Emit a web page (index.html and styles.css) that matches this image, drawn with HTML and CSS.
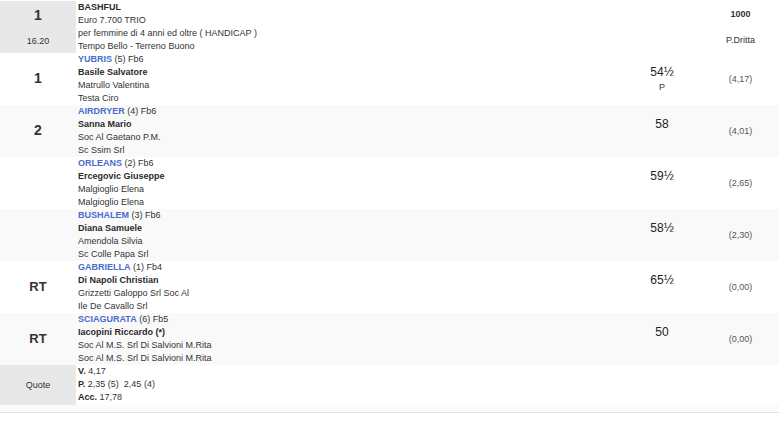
FILE: index.html
```html
<!DOCTYPE html>
<html lang="it">
<head>
<meta charset="utf-8">
<title>Risultati corsa</title>
<link rel="stylesheet" href="styles.css">
</head>
<body>
<div class="race">
<table class="results">
  <colgroup>
    <col class="c-pos">
    <col class="c-info">
    <col class="c-weight">
    <col class="c-odds">
  </colgroup>
  <tr class="head">
    <td class="pos grey top">
      <div class="big">1</div>
      <div class="time">16.20</div>
    </td>
    <td class="info">
      <div><b>BASHFUL</b></div>
      <div>Euro 7.700 TRIO</div>
      <div>per femmine di 4 anni ed oltre ( HANDICAP )</div>
      <div>Tempo Bello - Terreno Buono</div>
    </td>
    <td></td>
    <td class="odds">
      <div><b>1000</b></div>
      <div>&nbsp;</div>
      <div>P.Dritta</div>
    </td>
  </tr>
  <tr>
    <td class="pos"><span class="big">1</span></td>
    <td class="info">
      <div><span class="horse">YUBRIS</span> (5) Fb6</div>
      <div><b>Basile Salvatore</b></div>
      <div>Matrullo Valentina</div>
      <div>Testa Ciro</div>
    </td>
    <td class="weight"><div class="kg">54½</div><div class="sub">P</div></td>
    <td class="odds">(4,17)</td>
  </tr>
  <tr class="alt">
    <td class="pos"><span class="big">2</span></td>
    <td class="info">
      <div><span class="horse">AIRDRYER</span> (4) Fb6</div>
      <div><b>Sanna Mario</b></div>
      <div>Soc Al Gaetano P.M.</div>
      <div>Sc Ssim Srl</div>
    </td>
    <td class="weight"><div class="kg">58</div><div class="sub">&nbsp;</div></td>
    <td class="odds">(4,01)</td>
  </tr>
  <tr>
    <td class="pos"></td>
    <td class="info">
      <div><span class="horse">ORLEANS</span> (2) Fb6</div>
      <div><b>Ercegovic Giuseppe</b></div>
      <div>Malgioglio Elena</div>
      <div>Malgioglio Elena</div>
    </td>
    <td class="weight"><div class="kg">59½</div><div class="sub">&nbsp;</div></td>
    <td class="odds">(2,65)</td>
  </tr>
  <tr class="alt">
    <td class="pos"></td>
    <td class="info">
      <div><span class="horse">BUSHALEM</span> (3) Fb6</div>
      <div><b>Diana Samuele</b></div>
      <div>Amendola Silvia</div>
      <div>Sc Colle Papa Srl</div>
    </td>
    <td class="weight"><div class="kg">58½</div><div class="sub">&nbsp;</div></td>
    <td class="odds">(2,30)</td>
  </tr>
  <tr>
    <td class="pos"><span class="big rt">RT</span></td>
    <td class="info">
      <div><span class="horse">GABRIELLA</span> (1) Fb4</div>
      <div><b>Di Napoli Christian</b></div>
      <div>Grizzetti Galoppo Srl Soc Al</div>
      <div>Ile De Cavallo Srl</div>
    </td>
    <td class="weight"><div class="kg">65½</div><div class="sub">&nbsp;</div></td>
    <td class="odds">(0,00)</td>
  </tr>
  <tr class="alt">
    <td class="pos"><span class="big rt">RT</span></td>
    <td class="info">
      <div><span class="horse">SCIAGURATA</span> (6) Fb5</div>
      <div><b>Iacopini Riccardo (*)</b></div>
      <div>Soc Al M.S. Srl Di Salvioni M.Rita</div>
      <div>Soc Al M.S. Srl Di Salvioni M.Rita</div>
    </td>
    <td class="weight"><div class="kg">50</div><div class="sub">&nbsp;</div></td>
    <td class="odds">(0,00)</td>
  </tr>
  <tr class="quote">
    <td class="pos grey">Quote</td>
    <td class="info">
      <div><b>V.</b> 4,17</div>
      <div><b>P.</b> 2,35 (5)&nbsp; 2,45 (4)</div>
      <div><b>Acc.</b> 17,78</div>
    </td>
    <td></td>
    <td></td>
  </tr>
</table>
<div class="foot"></div>
</div>
</body>
</html>
```

FILE: styles.css
```css
html, body {
  margin: 0;
  padding: 0;
  background: #ffffff;
}

body {
  font-family: "Liberation Sans", Arial, sans-serif;
  font-size: 9px;
  color: #333333;
}

.race {
  width: 779px;
  padding-top: 1px;
}

.results {
  width: 779px;
  border-collapse: collapse;
  table-layout: fixed;
}

.c-pos { width: 76px; }
.c-info { width: 546px; }
.c-weight { width: 80px; }
.c-odds { width: 77px; }

.results td {
  padding: 0;
  line-height: 13px;
  vertical-align: middle;
}

.results tr.alt td {
  background: #f9f9f9;
}

.results td.grey,
.results tr.alt td.grey {
  background: #e8e8e8;
}

.info {
  padding-left: 2px !important;
  vertical-align: top !important;
  white-space: nowrap;
}

.info b {
  color: #2b2b2b;
}

.pos {
  text-align: center;
  color: #333333;
}

.pos.top {
  vertical-align: top !important;
}

.big {
  font-size: 14px;
  font-weight: bold;
  color: #333333;
}

.rt {
  font-size: 13px;
}

.head .big {
  line-height: 28px;
}

.time {
  margin-top: 6px;
  line-height: 13px;
}

.horse {
  color: #4a6bcb;
  font-weight: bold;
}

.weight {
  text-align: center;
  color: #333333;
}

.kg {
  font-size: 12px;
  line-height: 15px;
  color: #222222;
}

.sub {
  line-height: 14px;
  color: #333333;
}

.odds {
  text-align: center;
  color: #555555;
}

.head .odds {
  color: #333333;
}

.quote td {
  height: 40px;
}

.foot {
  height: 7px;
  background: #fbfbfb;
  border-bottom: 1px solid #e2e2e2;
}
```
